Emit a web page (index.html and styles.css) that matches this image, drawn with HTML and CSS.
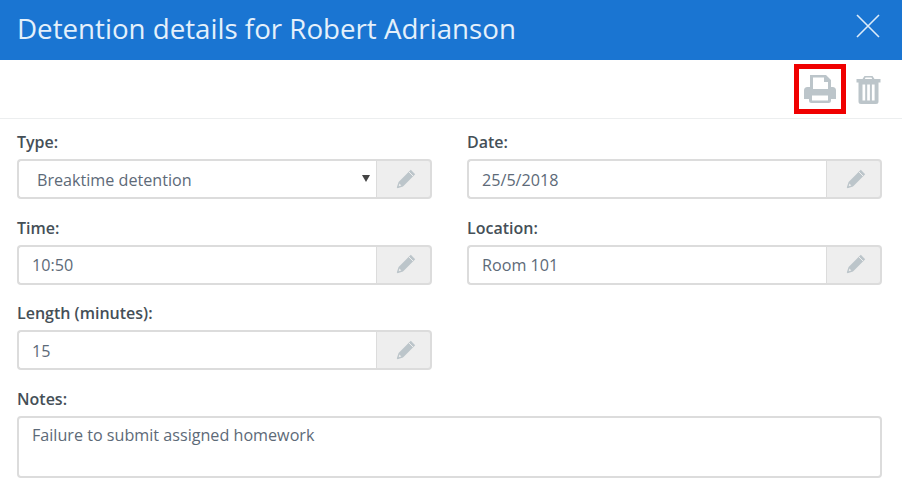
FILE: index.html
```html
<!DOCTYPE html>
<html lang="en">
<head>
<meta charset="utf-8">
<title>Detention details</title>
<link rel="stylesheet" href="styles.css">
</head>
<body>
<svg class="defs" width="0" height="0" aria-hidden="true">
  <symbol id="pencil" viewBox="0 0 20 20">
    <path d="M14.800 .8 19.200 5.200 7 17.400 1.500 19.200 .8 18.500 2.600 13z M3.400 14.600 2.700 17.300 5.400 16.600z" fill-rule="evenodd"/>
    <path d="M12.800 2.800 17.200 7.200" stroke="#eeeeee" stroke-width="1" fill="none"/>
  </symbol>
</svg>
<header class="title-bar">
  <h1>Detention details for Robert Adrianson</h1>
  <svg class="close" width="24" height="24" viewBox="0 0 24 24"><path d="M1 1 23 23M23 1 1 23"/></svg>
</header>
<div class="toolbar">
  <span class="print">
    <svg width="32" height="28" viewBox="0 0 32 28"><path fill-rule="evenodd" d="M6 0h16l5 5v7h1.500A3.500 3.500 0 0 1 32 15.500V24h-5v1.500a2.500 2.500 0 0 1-2.500 2.500h-17A2.500 2.500 0 0 1 5 25.500V24H0v-8.500A3.500 3.500 0 0 1 3.500 12H6zM9 2.500V14h15V7H20V2.500zM8 20.500v5h16v-5z"/></svg>
  </span>
  <svg class="trash" width="25" height="28" viewBox="0 0 24 28"><path fill-rule="evenodd" d="M8 0h8l2 3h6V6.500H22v19A2.500 2.500 0 0 1 19.500 28h-15A2.500 2.500 0 0 1 2 25.500V6.500H0V3h6zM9 1.600 8.400 3h7.200L15 1.600zM6 8.500v16h2.700v-16zM10.700 8.500v16h2.700v-16zM15.400 8.500v16h2.700v-16z"/></svg>
</div>
<form class="form">
  <div class="field">
    <label>Type:</label>
    <div class="group">
      <div class="control select"><span>Breaktime detention</span><i class="caret"></i></div>
      <span class="addon"><svg width="20" height="20"><use href="#pencil"/></svg></span>
    </div>
  </div>
  <div class="field">
    <label>Date:</label>
    <div class="group">
      <div class="control">25/5/2018</div>
      <span class="addon"><svg width="20" height="20"><use href="#pencil"/></svg></span>
    </div>
  </div>
  <div class="field">
    <label>Time:</label>
    <div class="group">
      <div class="control">10:50</div>
      <span class="addon"><svg width="20" height="20"><use href="#pencil"/></svg></span>
    </div>
  </div>
  <div class="field">
    <label>Location:</label>
    <div class="group">
      <div class="control">Room 101</div>
      <span class="addon"><svg width="20" height="20"><use href="#pencil"/></svg></span>
    </div>
  </div>
  <div class="field">
    <label>Length (minutes):</label>
    <div class="group">
      <div class="control">15</div>
      <span class="addon"><svg width="20" height="20"><use href="#pencil"/></svg></span>
    </div>
  </div>
  <div class="field wide">
    <label>Notes:</label>
    <div class="notes">Failure to submit assigned homework</div>
  </div>
</form>
</body>
</html>
```
FILE: styles.css
```css
* { box-sizing: border-box; }
html, body { margin: 0; padding: 0; background: #fff; overflow: hidden; }
body { width: 902px; height: 501px; font-family: "Open Sans", "Liberation Sans", sans-serif; color: #555; }
.defs { display: block; height: 0; }
.title-bar {
  height: 60px; background: #1a75d2; color: #e4f0fb;
  display: flex; align-items: center; justify-content: space-between;
  padding: 0 22px 2px 17px;
}
.title-bar h1 { margin: 0; font-size: 27.700px; font-weight: 400; line-height: 1; }
.close { stroke: #dcebfa; stroke-width: 1.600; fill: none; margin-bottom: 6px; }
.toolbar {
  height: 59px; border-bottom: 1px solid #eceeef;
  display: flex; align-items: flex-start; justify-content: flex-end;
  padding: 4px 21px 0 0; gap: 10px;
}
.print {
  width: 52px; height: 50px; border: 5px solid #f00000;
  display: flex; align-items: center; justify-content: center;
}
.print svg { fill: #bcc5ca; }
.trash { fill: #bcc5ca; margin-top: 12px; }
.form {
  display: grid; grid-template-columns: 414.500px 414.500px; column-gap: 35.500px;
  padding: 13px 20px 0 17px; row-gap: 18.500px;
}
.field { display: flex; flex-direction: column; }
.wide { grid-column: 1 / -1; }
.field label {
  font-size: 16px; font-weight: 600; line-height: 20px; color: #454f57; margin-bottom: 7px;
}
.group { display: flex; height: 40px; }
.control {
  flex: 1; border: 2px solid #dcdcdc; border-right: 0; border-radius: 4px 0 0 4px;
  padding: 1px 13px 0; font-size: 16.150px; color: #5d6a78;
  display: flex; align-items: center; background: #fff;
}
.select { padding-left: 18px; padding-right: 6px; justify-content: space-between; }
.caret {
  width: 0; height: 0; border-left: 4px solid transparent; border-right: 4px solid transparent;
  border-top: 7px solid #444; margin-bottom: 3px;
}
.addon {
  width: 55.500px; background: #eeeeee; border: 2px solid #dcdcdc; border-left-width: 1px;
  border-radius: 0 4px 4px 0; display: flex; align-items: center; justify-content: center;
  padding-left: 5px; padding-bottom: 1px;
}
.addon svg { fill: #bcc5ca; }
.notes {
  height: 62px; border: 2px solid #dcdcdc; border-radius: 4px;
  padding: 7px 13px; font-size: 16.150px; line-height: 20px; color: #5d6a78;
}
```
